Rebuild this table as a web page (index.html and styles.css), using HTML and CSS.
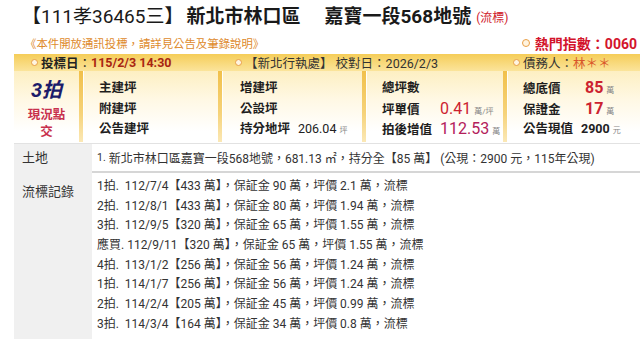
FILE: index.html
```html
<!DOCTYPE html>
<html lang="zh-Hant">
<head>
<meta charset="utf-8">
<title>111孝36465</title>
<link rel="stylesheet" href="styles.css">
</head>
<body>
<h1 class="title"><span class="case">【111孝36465三】</span><b class="city">新北市林口區</b><b class="addr">嘉寶一段568地號</b><span class="status">(流標)</span></h1>
<div class="notice-row">
  <span class="notice">《本件開放通訊投標，請詳見公告及筆錄說明》</span>
  <span class="hot"><i class="dot"></i>熱門指數：0060</span>
</div>
<div class="card">
  <div class="bar">
    <span class="bar-item b1"><i class="dot"></i><b>投標日</b>：<span class="date">115/2/3 14:30</span></span>
    <span class="bar-item b2"><i class="dot"></i>【新北行執處】 校對日：2026/2/3</span>
    <span class="bar-item b3"><i class="dot"></i>債務人：<span class="debtor">林＊＊</span></span>
  </div>
  <div class="panel">
    <div class="cell round">
      <div class="round-no">3拍</div>
      <div class="handover">現況點交</div>
    </div>
    <div class="sep"></div>
    <div class="cell">
      <div class="kv"><span class="k">主建坪</span><span class="v"></span></div>
      <div class="kv"><span class="k">附建坪</span><span class="v"></span></div>
      <div class="kv"><span class="k">公告建坪</span><span class="v"></span></div>
    </div>
    <div class="sep"></div>
    <div class="cell c3">
      <div class="kv"><span class="k">增建坪</span><span class="v"></span></div>
      <div class="kv"><span class="k">公設坪</span><span class="v"></span></div>
      <div class="kv"><span class="k">持分地坪</span><span class="v plain">206.04<small>坪</small></span></div>
    </div>
    <div class="sep"></div>
    <div class="cell">
      <div class="kv"><span class="k">總坪數</span><span class="v"></span></div>
      <div class="kv"><span class="k">坪單價</span><span class="v red">0.41<small>萬/坪</small></span></div>
      <div class="kv"><span class="k">拍後增值</span><span class="v plum">112.53<small>萬</small></span></div>
    </div>
    <div class="sep"></div>
    <div class="cell">
      <div class="kv"><span class="k">總底價</span><span class="v red big">85<small>萬</small></span></div>
      <div class="kv"><span class="k">保證金</span><span class="v red big">17<small>萬</small></span></div>
      <div class="kv"><span class="k">公告現值</span><span class="v plain bold">2900<small>元</small></span></div>
    </div>
  </div>
  <div class="info">
    <div class="row land">
      <div class="label">土地</div>
      <div class="content"><span class="idx">1.</span> 新北市林口區嘉寶一段568地號，681.13 ㎡，持分全【85 萬】 (公現：2900 元，115年公現)</div>
    </div>
    <div class="row records">
      <div class="label">流標記錄</div>
      <div class="content">
        <div class="rec">1拍.&nbsp; 112/7/4【433 萬】，保証金 90 萬，坪價 2.1 萬，流標</div>
        <div class="rec">2拍.&nbsp; 112/8/1【433 萬】，保証金 80 萬，坪價 1.94 萬，流標</div>
        <div class="rec">3拍.&nbsp; 112/9/5【320 萬】，保証金 65 萬，坪價 1.55 萬，流標</div>
        <div class="rec">應買. 112/9/11【320 萬】，保証金 65 萬，坪價 1.55 萬，流標</div>
        <div class="rec">4拍.&nbsp; 113/1/2【256 萬】，保証金 56 萬，坪價 1.24 萬，流標</div>
        <div class="rec">1拍.&nbsp; 114/1/7【256 萬】，保証金 56 萬，坪價 1.24 萬，流標</div>
        <div class="rec">2拍.&nbsp; 114/2/4【205 萬】，保証金 45 萬，坪價 0.99 萬，流標</div>
        <div class="rec">3拍.&nbsp; 114/3/4【164 萬】，保証金 34 萬，坪價 0.8 萬，流標</div>
      </div>
    </div>
  </div>
</div>
</body>
</html>
```
FILE: styles.css
```css
html, body {
  margin: 0;
  padding: 0;
  background: #fff;
}
body {
  width: 640px;
  height: 339px;
  overflow: hidden;
  font-family: Roboto, "Noto Sans CJK TC", sans-serif;
  color: #222;
}
.title {
  margin: 0;
  height: 32px;
  box-sizing: border-box;
  padding: 5px 0 0 22px;
  font-size: 19px;
  line-height: 24px;
  font-weight: normal;
  white-space: nowrap;
  color: #1a1a1a;
}
.title .case {
  margin-right: 3px;
}
.title .city {
  font-weight: bold;
  margin-right: 24px;
}
.title .addr {
  font-weight: bold;
}
.title .status {
  font-size: 12px;
  color: #d0202a;
  margin-left: 5px;
  vertical-align: 1px;
}
.notice-row {
  height: 22px;
  display: flex;
  align-items: center;
  justify-content: space-between;
  padding: 0 3px 0 25px;
  white-space: nowrap;
}
.notice {
  font-size: 11.4px;
  color: #de8a2c;
}
.hot {
  display: flex;
  align-items: center;
  font-size: 14px;
  font-weight: bold;
  color: #d3142c;
}
.dot {
  display: inline-block;
  width: 5px;
  height: 5px;
  border: 1.6px solid #e9a048;
  border-radius: 50%;
  background: #fff4e0;
  margin-right: 3px;
  flex: none;
}
.hot .dot {
  width: 6px;
  height: 6px;
  margin-right: 5px;
}
.card {
  margin-left: 14px;
}
.bar {
  height: 17px;
  display: flex;
  align-items: center;
  padding-left: 17px;
  font-size: 12.5px;
  white-space: nowrap;
  color: #222;
  background: linear-gradient(#f5cd58, #fbe49b);
}
.bar-item {
  display: flex;
  align-items: center;
}
.b1 { width: 204px; }
.b2 { width: 278px; color: #333; }
.b3 { color: #333; }
.b1 b { font-weight: bold; }
.date {
  color: #a82512;
  font-weight: bold;
}
.debtor {
  color: #d8552a;
}
.panel {
  display: grid;
  grid-template-columns: 65px 4px 135px 4px 140px 4px 137px 4px 1fr;
  height: 71px;
  background: linear-gradient(#fdefc2 0%, #fff8e4 40%, #fff 85%);
}
.sep {
  background: linear-gradient(#f1c04a 0%, #f6d37a 60%, #fbe8b6 100%);
  box-shadow: 1px 0 0 rgba(255, 255, 255, 0.9);
}
.cell {
  padding: 7px 0 0 16px;
  font-size: 12.5px;
}
.c3 {
  padding-left: 18px;
}
.kv {
  display: grid;
  grid-template-columns: 58px auto;
  align-items: baseline;
  height: 20.5px;
  line-height: 20.5px;
  white-space: nowrap;
}
.k {
  font-weight: bold;
  color: #1e1e1e;
}
.v small {
  font-size: 8px;
  color: #888;
  font-weight: normal;
  margin-left: 3px;
}
.v.plain {
  font-size: 12.5px;
  color: #222;
}
.v.bold {
  font-weight: bold;
}
.v.red {
  font-size: 16px;
  color: #cc2230;
}
.v.plum {
  font-size: 16px;
  color: #b3205a;
}
.v.big {
  font-weight: bold;
  font-size: 16px;
  margin-left: 4px;
}
.round {
  padding: 7px 0 0 0;
  text-align: center;
}
.round-no {
  font-size: 20px;
  line-height: 24px;
  font-style: italic;
  font-weight: bold;
  color: #1c1c6a;
}
.handover {
  width: 42px;
  margin: 4px auto 0;
  font-size: 12.5px;
  line-height: 17px;
  font-weight: bold;
  color: #c8304c;
}
.info {
  margin-top: 1px;
  border-top: 1px solid #e2e2e2;
}
.row {
  display: grid;
  grid-template-columns: 78px 1fr;
}
.label {
  background: #f0f0f0;
  padding-left: 8px;
  font-size: 13px;
  color: #333;
}
.content {
  padding-left: 5px;
  font-size: 12px;
  color: #333;
  white-space: nowrap;
}
.land {
  height: 27px;
  line-height: 27px;
  border-bottom: 2px solid #d6d6d6;
}
.idx {
  font-size: 10.5px;
  vertical-align: 2px;
}
.records {
  height: 170px;
}
.records .label {
  padding-top: 9px;
  line-height: 20px;
}
.records .content {
  padding-top: 4px;
}
.rec {
  height: 19.7px;
  line-height: 19.7px;
}
```
